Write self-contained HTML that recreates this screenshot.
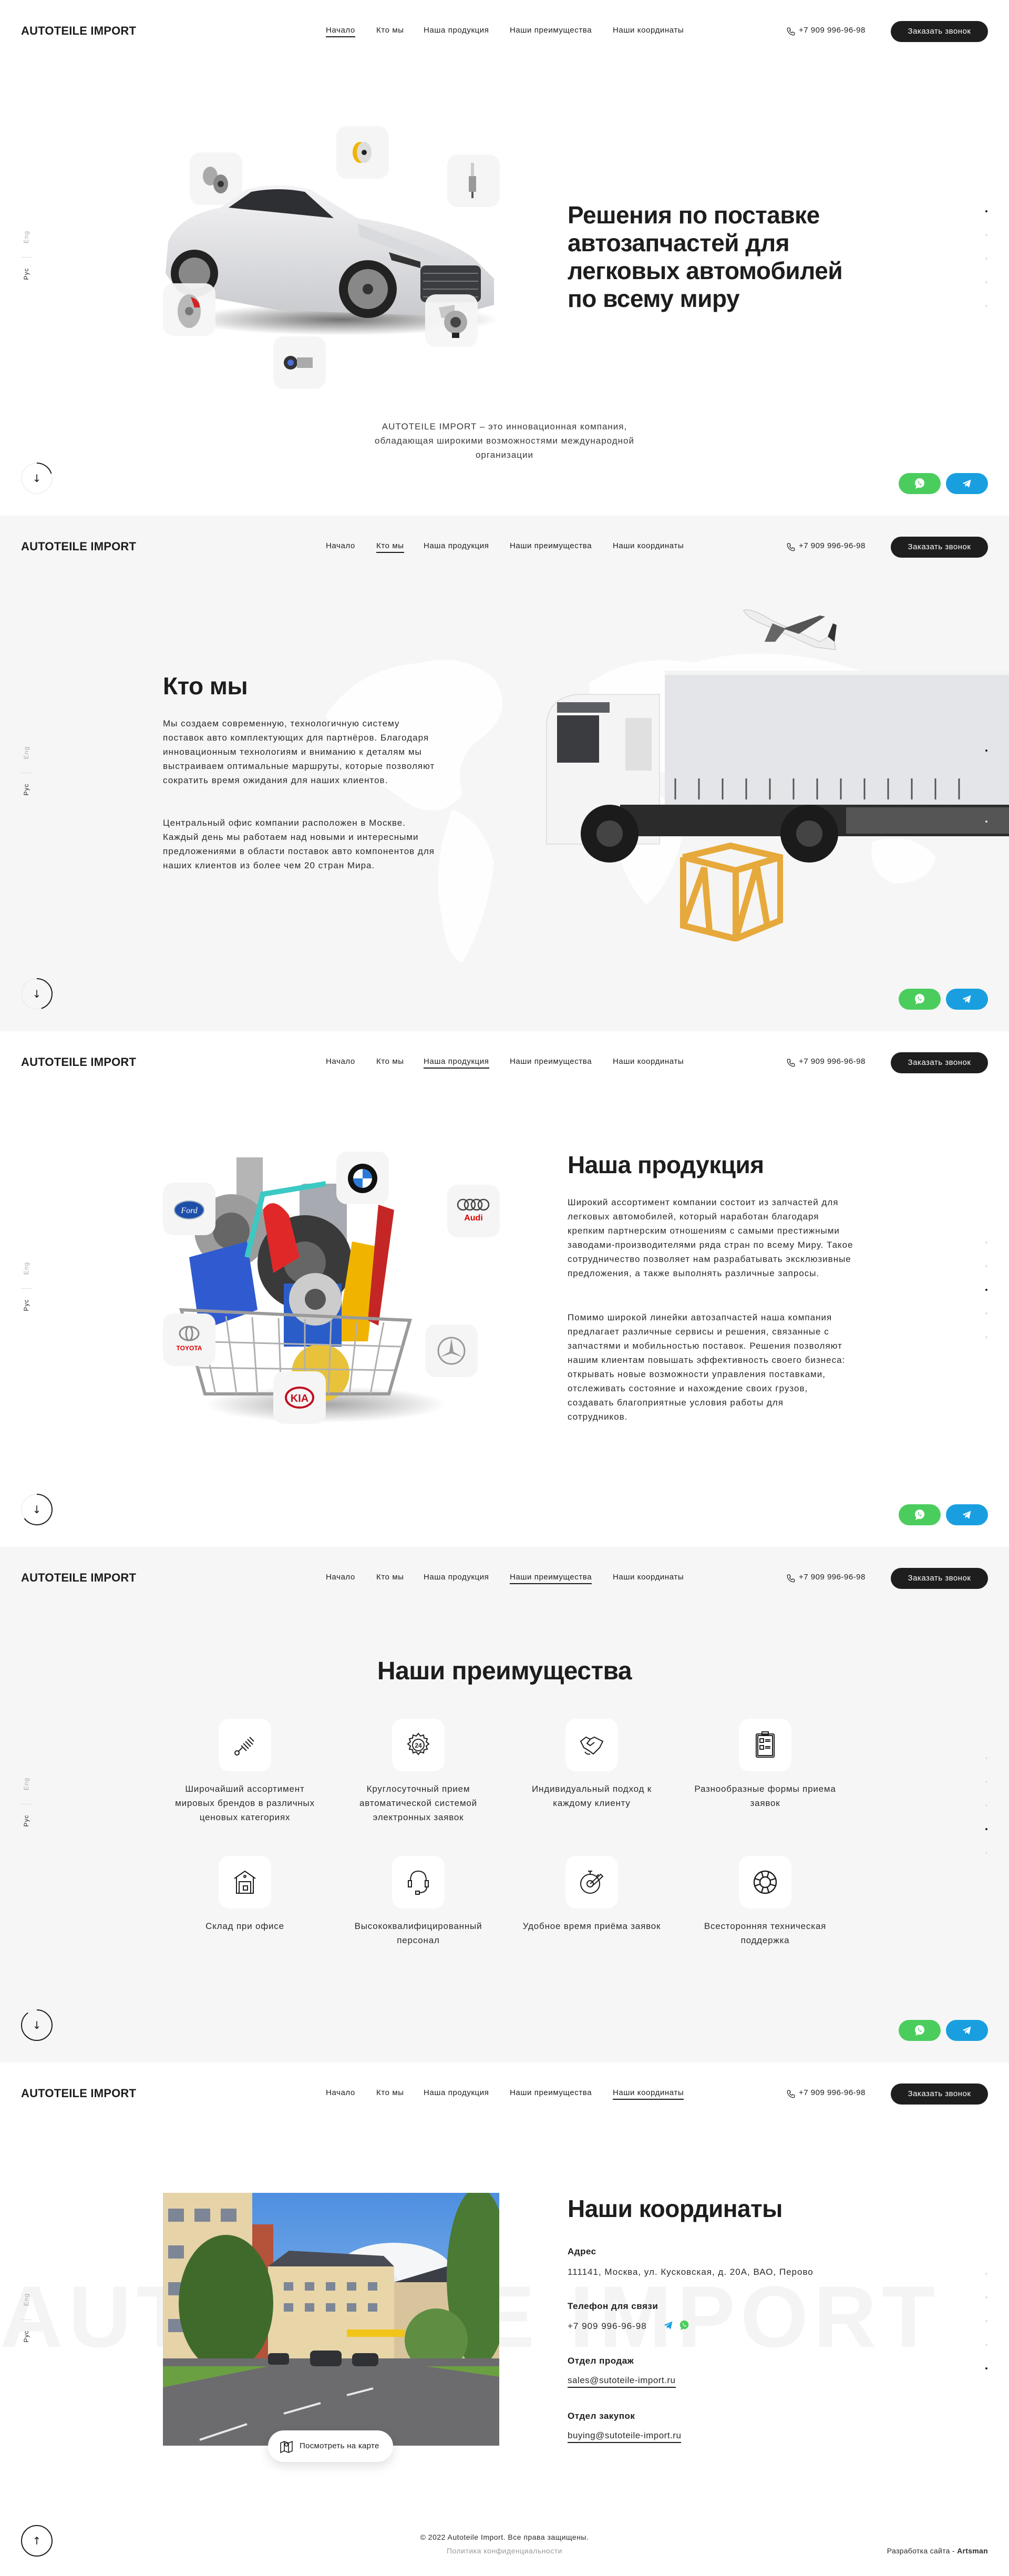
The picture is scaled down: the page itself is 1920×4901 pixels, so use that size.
<!DOCTYPE html>
<html><head><meta charset="utf-8">
<style>
*{margin:0;padding:0;box-sizing:border-box}
body{width:1920px;height:4901px;position:relative;font-family:"Liberation Sans","DejaVu Sans",sans-serif;color:#1d1d1d;background:#fff;overflow:hidden}
.sec{position:absolute;left:0;width:1920px;height:981px;overflow:hidden}
.a{position:absolute}
.logo{left:40px;top:46px;font-size:22px;font-weight:bold;letter-spacing:0.2px;white-space:nowrap}
.nav{top:49px;font-size:15px;white-space:nowrap;letter-spacing:0.6px}
.nav.on{border-bottom:2px solid #1d1d1d;padding-bottom:3px}
.phone{left:1496px;top:49px;font-size:15px;white-space:nowrap;letter-spacing:0.5px}
.btn{left:1695px;top:40px;width:185px;height:40px;border-radius:20px;background:#1e1e1e;color:#fff;font-size:15px;text-align:center;line-height:40px;letter-spacing:0.5px}
.wa{left:1710px;top:900px;width:80px;height:40px;border-radius:20px;background:#4bcd5d}
.tg{left:1800px;top:900px;width:80px;height:40px;border-radius:20px;background:#199fe0}
.lang{left:40px;top:436px;width:20px;height:110px}
.h{font-size:46px;font-weight:bold;letter-spacing:-0.5px;line-height:53px}
.p{font-size:17px;line-height:27px;color:#2a2a2a;letter-spacing:1px}
.tile{width:100px;height:100px;border-radius:20px;background:#f5f5f5}
.wt{background:#fff}
.lbl{font-size:17px;line-height:27px;color:#2a2a2a;text-align:center;width:290px;letter-spacing:0.8px}
.dot{left:1875px;width:4px;height:4px;border-radius:2px;background:#e3e3e3}
.dot.on{background:#1d1d1d}
</style></head><body>

<!-- ===== SECTION 1 ===== -->
<div class="sec" style="top:0;background:#fff">
  <div class="a logo">AUTOTEILE IMPORT</div>
  <div class="a nav on" style="left:620px">Начало</div>
  <div class="a nav" style="left:716px">Кто мы</div>
  <div class="a nav" style="left:806px">Наша продукция</div>
  <div class="a nav" style="left:970px">Наши преимущества</div>
  <div class="a nav" style="left:1166px">Наши координаты</div>
  <svg class="a" style="left:1496px;top:51px" width="18" height="18" viewBox="0 0 24 24" fill="none" stroke="#1d1d1d" stroke-width="1.6"><path d="M5 3h4l2 5-2.5 1.5a11 11 0 0 0 6 6L16 13l5 2v4a2 2 0 0 1-2 2A16 16 0 0 1 3 5a2 2 0 0 1 2-2"/></svg>
  <div class="a phone" style="left:1520px">+7 909 996-96-98</div>
  <div class="a btn">Заказать звонок</div>

  <div class="a tile" style="left:361px;top:290px"></div>
  <div class="a tile" style="left:640px;top:240px"></div>
  <div class="a tile" style="left:851px;top:294px"></div>
  <svg class="a" style="left:300px;top:340px" width="660" height="300" viewBox="0 0 660 300">
    <defs><linearGradient id="cb" x1="0" y1="0" x2="0" y2="1"><stop offset="0" stop-color="#f4f4f6"/><stop offset="1" stop-color="#c9cace"/></linearGradient>
    <radialGradient id="sh"><stop offset="0" stop-color="#000" stop-opacity=".55"/><stop offset="1" stop-color="#000" stop-opacity="0"/></radialGradient></defs>
    <ellipse cx="350" cy="268" rx="300" ry="30" fill="url(#sh)"/>
    <path d="M20 120 Q40 70 120 55 L170 20 Q230 5 290 20 L380 75 Q520 95 600 150 L640 190 L640 240 L560 262 L230 250 L40 215 L15 180 Z" fill="url(#cb)"/>
    <path d="M135 55 L178 25 Q230 15 280 25 L335 75 Z" fill="#2d2f33"/>
    <path d="M380 85 L560 155 L560 175 L385 110Z" fill="#d9dade"/>
    <rect x="500" y="165" width="115" height="70" rx="10" fill="#3a3c40"/>
    <g stroke="#777" stroke-width="2"><line x1="505" y1="180" x2="610" y2="180"/><line x1="505" y1="195" x2="610" y2="195"/><line x1="505" y1="210" x2="610" y2="210"/><line x1="505" y1="225" x2="610" y2="225"/></g>
    <path d="M440 140 L500 158 L500 170 L445 155Z" fill="#333"/>
    <circle cx="400" cy="210" r="55" fill="#222"/><circle cx="400" cy="210" r="38" fill="#888"/><circle cx="400" cy="210" r="10" fill="#333"/>
    <circle cx="70" cy="180" r="45" fill="#222"/><circle cx="70" cy="180" r="30" fill="#888"/>
  </svg>
  <div class="a tile" style="left:310px;top:539px;opacity:.95"></div>
  <div class="a tile" style="left:809px;top:560px;opacity:.95"></div>
  <div class="a tile" style="left:520px;top:640px"></div>
  <svg class="a" style="left:375px;top:305px" width="70" height="70"><ellipse cx="25" cy="30" rx="14" ry="18" fill="#aaa"/><ellipse cx="45" cy="45" rx="14" ry="18" fill="#888"/><circle cx="45" cy="45" r="6" fill="#333"/></svg>
  <svg class="a" style="left:660px;top:260px" width="60" height="60"><ellipse cx="25" cy="30" rx="14" ry="20" fill="#f1b400"/><ellipse cx="33" cy="30" rx="14" ry="20" fill="#ddd"/><circle cx="33" cy="30" r="5" fill="#222"/></svg>
  <svg class="a" style="left:880px;top:305px" width="40" height="80"><rect x="16" y="5" width="6" height="25" fill="#ccc"/><rect x="12" y="30" width="14" height="30" fill="#999"/><rect x="17" y="60" width="4" height="12" fill="#555"/></svg>
  <svg class="a" style="left:325px;top:550px" width="70" height="80"><ellipse cx="35" cy="42" rx="22" ry="32" fill="#b8b8b8"/><path d="M38 15 Q55 20 55 35 L45 35Z" fill="#d42222"/><circle cx="35" cy="42" r="8" fill="#777"/></svg>
  <svg class="a" style="left:825px;top:575px" width="70" height="80"><path d="M10 10 L40 5 L40 30 L15 30Z" fill="#c8c8c8"/><circle cx="42" cy="38" r="22" fill="#aaa"/><circle cx="42" cy="38" r="10" fill="#444"/><rect x="35" y="58" width="14" height="10" fill="#222"/></svg>
  <svg class="a" style="left:535px;top:665px" width="70" height="50"><circle cx="18" cy="25" r="13" fill="#333"/><circle cx="18" cy="25" r="6" fill="#4a6fd8"/><rect x="30" y="15" width="30" height="20" fill="#aaa"/></svg>

  <div class="a h" style="left:1080px;top:383px">Решения по поставке<br>автозапчастей для<br>легковых автомобилей<br>по всему миру</div>
  <div class="a p" style="left:690px;top:798px;width:540px;text-align:center;color:#3a3a3a">AUTOTEILE IMPORT – это инновационная компания, обладающая широкими возможностями международной организации</div>
</div>

<!-- ===== SECTION 2 ===== -->
<div class="sec" style="top:981px;background:#f6f6f6">
  <svg class="a" style="left:560px;top:200px" width="1360" height="700" viewBox="0 0 1360 700" fill="#fff" opacity=".9">
    <path d="M60 180 Q120 90 240 80 Q320 60 380 110 Q420 170 360 220 Q300 260 320 330 Q280 380 220 350 Q150 300 90 260Z"/>
    <path d="M300 360 Q360 380 380 460 Q370 560 320 650 Q290 640 280 560 Q260 470 300 360Z"/>
    <path d="M560 120 Q640 60 760 80 Q900 40 1060 90 Q1180 120 1200 200 Q1150 260 1040 270 Q980 330 900 300 Q820 330 760 290 Q680 300 620 250 Q570 200 560 120Z"/>
    <path d="M620 300 Q720 320 740 400 Q720 500 670 540 Q630 500 610 420 Q590 350 620 300Z"/>
    <path d="M1100 420 Q1180 400 1220 450 Q1210 500 1140 500 Q1090 480 1100 420Z"/>
  </svg>
  <div class="a logo">AUTOTEILE IMPORT</div>
  <div class="a nav" style="left:620px">Начало</div>
  <div class="a nav on" style="left:716px">Кто мы</div>
  <div class="a nav" style="left:806px">Наша продукция</div>
  <div class="a nav" style="left:970px">Наши преимущества</div>
  <div class="a nav" style="left:1166px">Наши координаты</div>
  <svg class="a" style="left:1496px;top:51px" width="18" height="18" viewBox="0 0 24 24" fill="none" stroke="#1d1d1d" stroke-width="1.6"><path d="M5 3h4l2 5-2.5 1.5a11 11 0 0 0 6 6L16 13l5 2v4a2 2 0 0 1-2 2A16 16 0 0 1 3 5a2 2 0 0 1 2-2"/></svg>
  <div class="a phone" style="left:1520px">+7 909 996-96-98</div>
  <div class="a btn">Заказать звонок</div>

  <svg class="a" style="left:1410px;top:170px" width="200" height="90" viewBox="0 0 200 90"><path d="M5 10 Q20 5 60 30 L150 70 L175 55 L180 85 L140 80 L50 40 Q10 25 5 10Z" fill="#eee" stroke="#bbb"/><path d="M80 45 L150 20 L160 22 L110 55Z" fill="#555"/><path d="M60 35 L45 70 L65 70 L85 45Z" fill="#666"/><path d="M165 60 L175 35 L182 38 L178 70Z" fill="#333"/></svg>
  <svg class="a" style="left:1030px;top:285px" width="890" height="380" viewBox="0 0 890 380">
    <rect x="235" y="10" width="655" height="255" fill="#e4e5e8"/>
    <rect x="235" y="10" width="655" height="8" fill="#f3f3f3"/>
    <g stroke="#555" stroke-width="3"><line x1="255" y1="215" x2="255" y2="255"/><line x1="300" y1="215" x2="300" y2="255"/><line x1="345" y1="215" x2="345" y2="255"/><line x1="390" y1="215" x2="390" y2="255"/><line x1="435" y1="215" x2="435" y2="255"/><line x1="480" y1="215" x2="480" y2="255"/><line x1="525" y1="215" x2="525" y2="255"/><line x1="570" y1="215" x2="570" y2="255"/><line x1="615" y1="215" x2="615" y2="255"/><line x1="660" y1="215" x2="660" y2="255"/><line x1="705" y1="215" x2="705" y2="255"/><line x1="750" y1="215" x2="750" y2="255"/><line x1="795" y1="215" x2="795" y2="255"/></g>
    <path d="M10 110 Q15 60 70 55 L225 55 L225 340 L10 340Z" fill="#f4f4f4" stroke="#ccc"/>
    <rect x="30" y="95" width="80" height="90" fill="#3a3c40"/>
    <rect x="30" y="70" width="100" height="20" fill="#5b5e63"/>
    <rect x="160" y="100" width="50" height="100" fill="#e0e0e0"/>
    <rect x="150" y="265" width="740" height="60" fill="#2b2b2b"/>
    <rect x="580" y="270" width="310" height="50" fill="#555"/>
    <circle cx="130" cy="320" r="55" fill="#1b1b1b"/><circle cx="130" cy="320" r="25" fill="#444"/>
    <circle cx="510" cy="320" r="55" fill="#1b1b1b"/><circle cx="510" cy="320" r="25" fill="#444"/>
  </svg>
  <svg class="a" style="left:1290px;top:620px" width="200" height="190" viewBox="0 0 200 190">
    <path d="M5 30 L90 0 L200 30 L200 150 L110 190 L5 160Z" fill="#f5f5f5"/>
    <g fill="none" stroke="#e6a93b" stroke-width="12"><path d="M10 30 L10 160 L110 185 L195 150 L195 30"/><path d="M10 30 L100 8 L195 30 L110 55 Z"/><path d="M10 160 L50 50 L60 170"/><path d="M110 185 L150 45 L170 160"/><path d="M110 55 L110 185"/></g>
  </svg>

  <div class="a h" style="left:310px;top:298px">Кто мы</div>
  <div class="a p" style="left:310px;top:382px;width:520px">Мы создаем современную, технологичную систему поставок авто комплектующих для партнёров. Благодаря инновационным технологиям и вниманию к деталям мы выстраиваем оптимальные маршруты, которые позволяют сократить время ожидания для наших клиентов.</div>
  <div class="a p" style="left:310px;top:571px;width:530px">Центральный офис компании расположен в Москве. Каждый день мы работаем над новыми и интересными предложениями в области поставок авто компонентов для наших клиентов из более чем 20 стран Мира.</div>
</div>

<!-- ===== SECTION 3 ===== -->
<div class="sec" style="top:1962px;background:#fff">
  <div class="a logo">AUTOTEILE IMPORT</div>
  <div class="a nav" style="left:620px">Начало</div>
  <div class="a nav" style="left:716px">Кто мы</div>
  <div class="a nav on" style="left:806px">Наша продукция</div>
  <div class="a nav" style="left:970px">Наши преимущества</div>
  <div class="a nav" style="left:1166px">Наши координаты</div>
  <svg class="a" style="left:1496px;top:51px" width="18" height="18" viewBox="0 0 24 24" fill="none" stroke="#1d1d1d" stroke-width="1.6"><path d="M5 3h4l2 5-2.5 1.5a11 11 0 0 0 6 6L16 13l5 2v4a2 2 0 0 1-2 2A16 16 0 0 1 3 5a2 2 0 0 1 2-2"/></svg>
  <div class="a phone" style="left:1520px">+7 909 996-96-98</div>
  <div class="a btn">Заказать звонок</div>

  <svg class="a" style="left:320px;top:230px" width="600" height="520" viewBox="0 0 600 520">
    <defs><radialGradient id="bs"><stop offset="0" stop-color="#000" stop-opacity=".35"/><stop offset="1" stop-color="#000" stop-opacity="0"/></radialGradient></defs>
    <ellipse cx="300" cy="480" rx="230" ry="35" fill="url(#bs)"/>
    <rect x="130" y="10" width="50" height="120" fill="#b5b5b5"/>
    <circle cx="120" cy="150" r="70" fill="#9c9c9c"/><circle cx="120" cy="150" r="35" fill="#666"/>
    <rect x="250" y="60" width="90" height="200" rx="10" fill="#a7aab0"/>
    <circle cx="260" cy="210" r="90" fill="#3a3a3a"/><circle cx="260" cy="210" r="40" fill="#666"/>
    <path d="M180 110 Q200 80 230 120 L250 200 L200 230Z" fill="#e02828"/>
    <path d="M40 200 L150 170 L170 300 L60 340Z" fill="#2f5ad0"/>
    <path d="M350 170 L400 180 L380 360 L320 360Z" fill="#f0b400"/>
    <rect x="220" y="250" width="110" height="120" fill="#2b5dc8"/>
    <circle cx="280" cy="280" r="50" fill="#ccc"/><circle cx="280" cy="280" r="20" fill="#555"/>
    <path d="M400 100 L430 110 L400 330 L380 320Z" fill="#c42626"/>
    <circle cx="290" cy="420" r="55" fill="#e8c23a"/>
    <path d="M25 300 L460 320 L420 460 L70 460Z" fill="none" stroke="#9a9a9a" stroke-width="6"/>
    <g stroke="#b0b0b0" stroke-width="3"><line x1="60" y1="310" x2="90" y2="460"/><line x1="110" y1="312" x2="130" y2="460"/><line x1="160" y1="314" x2="170" y2="460"/><line x1="210" y1="316" x2="215" y2="460"/><line x1="260" y1="318" x2="260" y2="460"/><line x1="310" y1="320" x2="305" y2="460"/><line x1="360" y1="322" x2="345" y2="460"/><line x1="410" y1="324" x2="385" y2="460"/><line x1="40" y1="360" x2="445" y2="370"/><line x1="55" y1="410" x2="430" y2="415"/></g>
    <path d="M150 200 L180 80 L300 60" fill="none" stroke="#3cc9c4" stroke-width="10"/>
  </svg>
  <div class="a tile" style="left:310px;top:288px"></div>
  <div class="a tile" style="left:640px;top:229px"></div>
  <div class="a tile" style="left:851px;top:292px"></div>
  <div class="a tile" style="left:310px;top:537px"></div>
  <div class="a tile" style="left:809px;top:558px"></div>
  <div class="a tile" style="left:520px;top:647px"></div>
  <svg class="a" style="left:330px;top:320px" width="60" height="40"><ellipse cx="30" cy="20" rx="28" ry="17" fill="#1e4fa8" stroke="#9ab" stroke-width="2"/><text x="30" y="26" font-size="16" font-style="italic" fill="#fff" text-anchor="middle" font-family="Liberation Serif">Ford</text></svg>
  <svg class="a" style="left:660px;top:250px" width="60" height="60"><circle cx="30" cy="30" r="28" fill="#111"/><circle cx="30" cy="30" r="18" fill="#fff"/><path d="M30 12 A18 18 0 0 1 48 30 L30 30Z M30 48 A18 18 0 0 1 12 30 L30 30Z" fill="#2a7ad8"/></svg>
  <svg class="a" style="left:866px;top:315px" width="70" height="55"><g fill="none" stroke="#444" stroke-width="2.5"><circle cx="15" cy="15" r="10"/><circle cx="28" cy="15" r="10"/><circle cx="41" cy="15" r="10"/><circle cx="54" cy="15" r="10"/></g><text x="35" y="45" font-size="16" font-weight="bold" fill="#d00" text-anchor="middle">Audi</text></svg>
  <svg class="a" style="left:330px;top:555px" width="60" height="60"><ellipse cx="30" cy="20" rx="18" ry="13" fill="none" stroke="#888" stroke-width="3"/><ellipse cx="30" cy="20" rx="6" ry="13" fill="none" stroke="#888" stroke-width="3"/><text x="30" y="52" font-size="12" font-weight="bold" fill="#d00" text-anchor="middle">TOYOTA</text></svg>
  <svg class="a" style="left:829px;top:578px" width="60" height="60"><circle cx="30" cy="30" r="25" fill="none" stroke="#999" stroke-width="3"/><path d="M30 6 L34 32 L52 42 L30 35 L8 42 L26 32Z" fill="#999"/></svg>
  <svg class="a" style="left:540px;top:675px" width="60" height="44"><ellipse cx="30" cy="22" rx="26" ry="19" fill="none" stroke="#c01020" stroke-width="4"/><text x="30" y="30" font-size="20" font-weight="bold" fill="#c01020" text-anchor="middle">KIA</text></svg>

  <div class="a h" style="left:1080px;top:228px">Наша продукция</div>
  <div class="a p" style="left:1080px;top:312px;width:545px">Широкий ассортимент компании состоит из запчастей для легковых автомобилей, который наработан благодаря крепким партнерским отношениям с самыми престижными заводами-производителями ряда стран по всему Миру. Такое сотрудничество позволяет нам разрабатывать эксклюзивные предложения, а также выполнять различные запросы.</div>
  <div class="a p" style="left:1080px;top:531px;width:530px">Помимо широкой линейки автозапчастей наша компания предлагает различные сервисы и решения, связанные с запчастями и мобильностью поставок. Решения позволяют нашим клиентам повышать эффективность своего бизнеса: открывать новые возможности управления поставками, отслеживать состояние и нахождение своих грузов, создавать благоприятные условия работы для сотрудников.</div>
</div>

<!-- ===== SECTION 4 ===== -->
<div class="sec" style="top:2943px;background:#f6f6f6">
  <div class="a logo">AUTOTEILE IMPORT</div>
  <div class="a nav" style="left:620px">Начало</div>
  <div class="a nav" style="left:716px">Кто мы</div>
  <div class="a nav" style="left:806px">Наша продукция</div>
  <div class="a nav on" style="left:970px">Наши преимущества</div>
  <div class="a nav" style="left:1166px">Наши координаты</div>
  <svg class="a" style="left:1496px;top:51px" width="18" height="18" viewBox="0 0 24 24" fill="none" stroke="#1d1d1d" stroke-width="1.6"><path d="M5 3h4l2 5-2.5 1.5a11 11 0 0 0 6 6L16 13l5 2v4a2 2 0 0 1-2 2A16 16 0 0 1 3 5a2 2 0 0 1 2-2"/></svg>
  <div class="a phone" style="left:1520px">+7 909 996-96-98</div>
  <div class="a btn">Заказать звонок</div>

  <div class="a h" style="left:0;width:1920px;text-align:center;top:210px;font-size:48px">Наши преимущества</div>

  <div class="a tile wt" style="left:416px;top:327px"></div>
  <div class="a tile wt" style="left:746px;top:327px"></div>
  <div class="a tile wt" style="left:1076px;top:327px"></div>
  <div class="a tile wt" style="left:1406px;top:327px"></div>
  <div class="a tile wt" style="left:416px;top:588px"></div>
  <div class="a tile wt" style="left:746px;top:588px"></div>
  <div class="a tile wt" style="left:1076px;top:588px"></div>
  <div class="a tile wt" style="left:1406px;top:588px"></div>
  <svg class="a" style="left:441px;top:352px" width="50" height="50" viewBox="0 0 50 50" fill="none" stroke="#1d1d1d" stroke-width="2"><circle cx="10" cy="40" r="4"/><path d="M13 37 L20 30"/><path d="M18 26 L28 36 M22 22 L32 32 M26 18 L36 28 M30 14 L40 24 M34 10 L42 18"/></svg>
  <svg class="a" style="left:771px;top:352px" width="50" height="50" viewBox="0 0 50 50" fill="none" stroke="#1d1d1d" stroke-width="2"><path d="M25 3 l4 5 6-2 1 6 6 1-2 6 5 4-5 4 2 6-6 1-1 6-6-2-4 5-4-5-6 2-1-6-6-1 2-6-5-4 5-4-2-6 6-1 1-6 6 2z"/><circle cx="25" cy="25" r="11"/><text x="25" y="30" font-size="12" font-weight="bold" fill="#1d1d1d" stroke="none" text-anchor="middle">24</text></svg>
  <svg class="a" style="left:1101px;top:352px" width="50" height="50" viewBox="0 0 50 50" fill="none" stroke="#1d1d1d" stroke-width="2"><path d="M4 18 L14 10 L22 14 L30 10 L46 18 L40 30 L28 42 L20 36 L10 30Z"/><path d="M22 14 L16 22 L22 26 L30 20"/><path d="M12 38 Q16 44 22 42"/></svg>
  <svg class="a" style="left:1431px;top:350px" width="50" height="54" viewBox="0 0 50 54" fill="none" stroke="#1d1d1d" stroke-width="2"><rect x="8" y="6" width="34" height="44" rx="2"/><rect x="11" y="9" width="28" height="38"/><rect x="19" y="2" width="12" height="6"/><rect x="15" y="15" width="7" height="7"/><rect x="15" y="28" width="7" height="7"/><path d="M25 17h10M25 20h10M25 30h10M25 33h10"/></svg>
  <svg class="a" style="left:441px;top:613px" width="50" height="50" viewBox="0 0 50 50" fill="none" stroke="#1d1d1d" stroke-width="2"><path d="M5 18 L25 4 L45 18"/><path d="M9 16 V46 H41 V16"/><rect x="14" y="24" width="22" height="22"/><circle cx="25" cy="14" r="2"/><rect x="22" y="32" width="8" height="8"/></svg>
  <svg class="a" style="left:771px;top:613px" width="50" height="50" viewBox="0 0 50 50" fill="none" stroke="#1d1d1d" stroke-width="2"><path d="M10 22 Q10 4 25 4 Q40 4 40 22"/><rect x="6" y="22" width="6" height="12"/><rect x="38" y="22" width="6" height="12"/><path d="M41 34 Q41 44 28 45"/><rect x="20" y="42" width="7" height="6"/></svg>
  <svg class="a" style="left:1101px;top:613px" width="50" height="50" viewBox="0 0 50 50" fill="none" stroke="#1d1d1d" stroke-width="2"><circle cx="22" cy="28" r="18"/><circle cx="22" cy="28" r="6"/><path d="M22 10V4M18 4h8M34 14l4-4"/><path d="M22 28 L42 10 L46 14 L26 32"/></svg>
  <svg class="a" style="left:1431px;top:613px" width="50" height="50" viewBox="0 0 50 50" fill="none" stroke="#1d1d1d" stroke-width="2.4"><circle cx="25" cy="25" r="21"/><circle cx="25" cy="25" r="10"/><path d="M18 5 L21 15 M32 5 L29 15 M45 18 L35 21 M45 32 L35 29 M32 45 L29 35 M18 45 L21 35 M5 32 L15 29 M5 18 L15 21"/></svg>

  <div class="a lbl" style="left:321px;top:447px">Широчайший ассортимент мировых брендов в различных ценовых категориях</div>
  <div class="a lbl" style="left:651px;top:447px">Круглосуточный прием автоматической системой электронных заявок</div>
  <div class="a lbl" style="left:981px;top:447px">Индивидуальный подход к каждому клиенту</div>
  <div class="a lbl" style="left:1311px;top:447px">Разнообразные формы приема заявок</div>
  <div class="a lbl" style="left:321px;top:708px">Склад при офисе</div>
  <div class="a lbl" style="left:651px;top:708px">Высококвалифицированный персонал</div>
  <div class="a lbl" style="left:981px;top:708px">Удобное время приёма заявок</div>
  <div class="a lbl" style="left:1311px;top:708px">Всесторонняя техническая поддержка</div>
</div>

<!-- ===== SECTION 5 ===== -->
<div class="sec" style="top:3924px;height:977px;background:#fff">
  <div class="a" style="left:0px;top:395px;width:2100px;font-size:166px;font-weight:bold;color:#f4f4f4;white-space:nowrap;letter-spacing:10px;line-height:180px">AUTOTEILE IMPORT</div>
  <div class="a logo">AUTOTEILE IMPORT</div>
  <div class="a nav" style="left:620px">Начало</div>
  <div class="a nav" style="left:716px">Кто мы</div>
  <div class="a nav" style="left:806px">Наша продукция</div>
  <div class="a nav" style="left:970px">Наши преимущества</div>
  <div class="a nav on" style="left:1166px">Наши координаты</div>
  <svg class="a" style="left:1496px;top:51px" width="18" height="18" viewBox="0 0 24 24" fill="none" stroke="#1d1d1d" stroke-width="1.6"><path d="M5 3h4l2 5-2.5 1.5a11 11 0 0 0 6 6L16 13l5 2v4a2 2 0 0 1-2 2A16 16 0 0 1 3 5a2 2 0 0 1 2-2"/></svg>
  <div class="a phone" style="left:1520px">+7 909 996-96-98</div>
  <div class="a btn">Заказать звонок</div>

  <svg class="a" style="left:310px;top:248px" width="640" height="481" viewBox="0 0 640 481">
    <defs><linearGradient id="sky" x1="0" y1="0" x2="0" y2="1"><stop offset="0" stop-color="#4e8fe0"/><stop offset="1" stop-color="#a9cdf2"/></linearGradient></defs>
    <rect width="640" height="481" fill="url(#sky)"/>
    <ellipse cx="440" cy="150" rx="110" ry="55" fill="#f4f6f8"/><ellipse cx="380" cy="175" rx="70" ry="35" fill="#e8ecf0"/>
    <rect x="0" y="0" width="170" height="330" fill="#e6d3a8"/>
    <rect x="170" y="60" width="40" height="270" fill="#b5523a"/>
    <rect x="200" y="140" width="240" height="190" fill="#e8d6a8"/>
    <path d="M200 140 L240 110 L420 120 L440 140Z" fill="#4a4c55"/>
    <rect x="440" y="170" width="200" height="160" fill="#d8c49c"/>
    <path d="M440 170 L640 110 L640 170Z" fill="#3c3e46"/>
    <g fill="#7d8696"><rect x="10" y="30" width="30" height="25"/><rect x="60" y="30" width="30" height="25"/><rect x="110" y="30" width="30" height="25"/><rect x="10" y="100" width="30" height="25"/><rect x="110" y="100" width="30" height="25"/><rect x="10" y="170" width="30" height="25"/><rect x="10" y="240" width="30" height="25"/><rect x="230" y="170" width="18" height="16"/><rect x="270" y="170" width="18" height="16"/><rect x="310" y="170" width="18" height="16"/><rect x="350" y="170" width="18" height="16"/><rect x="390" y="170" width="18" height="16"/><rect x="230" y="210" width="18" height="16"/><rect x="270" y="210" width="18" height="16"/><rect x="310" y="210" width="18" height="16"/><rect x="350" y="210" width="18" height="16"/><rect x="390" y="210" width="18" height="16"/></g>
    <ellipse cx="120" cy="210" rx="90" ry="130" fill="#3f6a2b"/>
    <ellipse cx="600" cy="160" rx="60" ry="170" fill="#4b7a35"/>
    <ellipse cx="520" cy="280" rx="60" ry="60" fill="#5f8d42"/>
    <rect x="350" y="260" width="110" height="14" fill="#f2c418"/>
    <rect x="0" y="315" width="640" height="166" fill="#6c6c6e"/>
    <path d="M0 370 Q150 340 200 330 L0 330Z" fill="#6ba042"/>
    <path d="M500 330 L640 330 L640 350Z" fill="#6ba042"/>
    <g fill="#2f3135"><rect x="280" y="300" width="60" height="30" rx="8"/><rect x="360" y="305" width="50" height="25" rx="8"/><rect x="200" y="305" width="40" height="22" rx="6"/></g>
    <g stroke="#e8e8e8" stroke-width="4"><line x1="70" y1="470" x2="160" y2="440"/><line x1="230" y1="420" x2="300" y2="400"/><line x1="350" y1="385" x2="400" y2="372"/></g>
  </svg>
  <div class="a" style="left:510px;top:700px;width:238px;height:60px;border-radius:30px;background:#fff;box-shadow:0 8px 20px rgba(0,0,0,.12)"></div>
  <svg class="a" style="left:532px;top:718px" width="26" height="26" viewBox="0 0 26 26" fill="none" stroke="#1d1d1d" stroke-width="1.6"><path d="M2 6 L9 3 L17 6 L24 3 V21 L17 24 L9 21 L2 24Z M9 3V21 M17 6V24"/><circle cx="13" cy="9" r="3"/></svg>
  <div class="a" style="left:570px;top:721px;font-size:15px;letter-spacing:0.3px">Посмотреть на карте</div>

  <div class="a h" style="left:1080px;top:252px">Наши координаты</div>
  <div class="a" style="left:1080px;top:350px;font-size:17px;font-weight:bold;letter-spacing:0.5px">Адрес</div>
  <div class="a p" style="left:1080px;top:385px;white-space:nowrap">111141, Москва, ул. Кусковская, д. 20А, ВАО, Перово</div>
  <div class="a" style="left:1080px;top:454px;font-size:17px;font-weight:bold;letter-spacing:0.5px">Телефон для связи</div>
  <div class="a p" style="left:1080px;top:488px">+7 909 996-96-98</div>
  <svg class="a" style="left:1262px;top:490px" width="20" height="20" viewBox="0 0 24 24"><path d="M2 11 L21 3 L17 21 L11 16 L8 20 L8 14 L18 6 L6 13Z" fill="#199fe0"/></svg>
  <svg class="a" style="left:1291px;top:487px" width="22" height="26" viewBox="0 0 24 24"><circle cx="12" cy="11" r="9" fill="#4bcd5d"/><path d="M4 22 L6 16 L10 19Z" fill="#4bcd5d"/><path d="M9 7 Q8 12 14 15 L16 13 L14 12 L13 13 Q11 12 10 10 L11 9 L10 7Z" fill="#fff"/></svg>
  <div class="a" style="left:1080px;top:558px;font-size:17px;font-weight:bold;letter-spacing:0.5px">Отдел продаж</div>
  <div class="a p" style="left:1080px;top:593px;border-bottom:2px solid #1d1d1d;line-height:24px;letter-spacing:0.5px">sales@sutoteile-import.ru</div>
  <div class="a" style="left:1080px;top:663px;font-size:17px;font-weight:bold;letter-spacing:0.5px">Отдел закупок</div>
  <div class="a p" style="left:1080px;top:698px;border-bottom:2px solid #1d1d1d;line-height:24px;letter-spacing:0.5px">buying@sutoteile-import.ru</div>

  <div class="a" style="left:0;width:1920px;text-align:center;top:895px;font-size:14px;color:#2a2a2a;letter-spacing:0.5px">© 2022 Autoteile Import. Все права защищены.</div>
  <div class="a" style="left:0;width:1920px;text-align:center;top:921px;font-size:14px;color:#999;letter-spacing:0.5px">Политика конфиденциальности</div>
  <div class="a" style="right:40px;top:921px;font-size:14px;color:#2a2a2a;letter-spacing:0.3px">Разработка сайта - <b>Artsman</b></div>
</div>

<div id="rep"></div>
<script>
var tops=[0,981,1962,2943,3924];
var prog=[0.2,0.45,0.65,0.9,1];
var h='';
tops.forEach(function(t,i){
  h+='<div class="a lang" style="top:'+(t+436)+'px"><div class="a" style="left:-10px;top:8px;transform:rotate(-90deg);font-size:12px;color:#aaa;letter-spacing:1px;width:40px;text-align:center">Eng</div><div class="a" style="left:0;top:53px;width:20px;height:1px;background:#ddd"></div><div class="a" style="left:-10px;top:78px;transform:rotate(-90deg);font-size:12px;color:#1d1d1d;letter-spacing:1px;width:40px;text-align:center">Рус</div></div>';
  var ys=[400,445,490,535,580];
  ys.forEach(function(y,j){h+='<div class="a dot'+(j==i?' on':'')+'" style="top:'+(t+y)+'px"></div>';});
  var c=2*Math.PI*29, arr=(i==4?'↑':'↓');
  h+='<svg class="a" style="left:40px;top:'+(t+880)+'px" width="60" height="60"><circle cx="30" cy="30" r="29" fill="none" stroke="#e6e6e6" stroke-width="1"/><circle cx="30" cy="30" r="29" fill="none" stroke="#1d1d1d" stroke-width="2" stroke-dasharray="'+(c*prog[i])+' '+c+'" transform="rotate(-90 30 30)"/><text x="30" y="37" font-size="20" text-anchor="middle" fill="#1d1d1d" font-family="DejaVu Sans">'+arr+'</text></svg>';
  if(i<4){
  h+='<div class="a wa" style="top:'+(t+900)+'px"><svg style="position:absolute;left:28px;top:8px" width="24" height="24" viewBox="0 0 24 24"><circle cx="12" cy="11" r="9" fill="#fff"/><path d="M4 22 L6 16 L10 19Z" fill="#fff"/><path d="M9 7 Q8 12 14 15 L16 13 L14 12 L13 13 Q11 12 10 10 L11 9 L10 7Z" fill="#4bcd5d"/></svg></div>';
  h+='<div class="a tg" style="top:'+(t+900)+'px"><svg style="position:absolute;left:30px;top:10px" width="20" height="20" viewBox="0 0 24 24"><path d="M2 11 L21 3 L17 21 L11 16 L8 20 L8 14 L18 6 L6 13Z" fill="#fff"/></svg></div>';}
});
document.getElementById('rep').innerHTML=h;
</script>
</body></html>
